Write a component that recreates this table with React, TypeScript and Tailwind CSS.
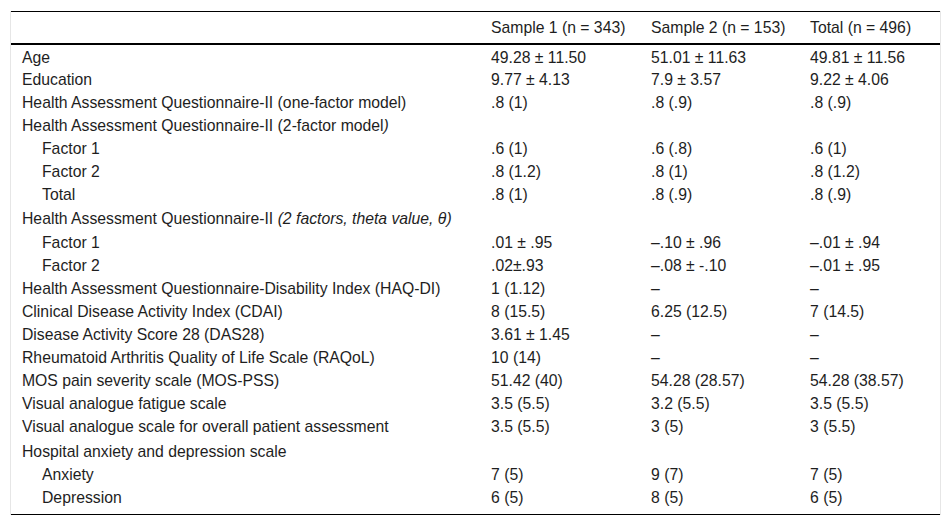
import React from "react";

type Row = {
  label: React.ReactNode;
  indent?: boolean;
  vals: string[];
  h?: string;
};

const rows: Row[] = [
  { label: "Age", vals: ["49.28 ± 11.50", "51.01 ± 11.63", "49.81 ± 11.56"], h: "h-[25px] [&>td]:pt-[2px]" },
  { label: "Education", vals: ["9.77 ± 4.13", "7.9 ± 3.57", "9.22 ± 4.06"] },
  { label: "Health Assessment Questionnaire-II (one-factor model)", vals: [".8 (1)", ".8 (.9)", ".8 (.9)"] },
  {
    label: (
      <>
        Health Assessment Questionnaire-II (2-factor model<i>)</i>
      </>
    ),
    vals: ["", "", ""],
  },
  { label: "Factor 1", indent: true, vals: [".6 (1)", ".6 (.8)", ".6 (1)"] },
  { label: "Factor 2", indent: true, vals: [".8 (1.2)", ".8 (1)", ".8 (1.2)"] },
  { label: "Total", indent: true, vals: [".8 (1)", ".8 (.9)", ".8 (.9)"] },
  {
    label: (
      <>
        Health Assessment Questionnaire-II <i>(2 factors, theta value, θ)</i>
      </>
    ),
    vals: ["", "", ""],
    h: "h-[25px]",
  },
  { label: "Factor 1", indent: true, vals: [".01 ± .95", "–.10 ± .96", "–.01 ± .94"] },
  { label: "Factor 2", indent: true, vals: [".02±.93", "–.08 ± -.10", "–.01 ± .95"] },
  { label: "Health Assessment Questionnaire-Disability Index (HAQ-DI)", vals: ["1 (1.12)", "–", "–"] },
  { label: "Clinical Disease Activity Index (CDAI)", vals: ["8 (15.5)", "6.25 (12.5)", "7 (14.5)"] },
  { label: "Disease Activity Score 28 (DAS28)", vals: ["3.61 ± 1.45", "–", "–"] },
  { label: "Rheumatoid Arthritis Quality of Life Scale (RAQoL)", vals: ["10 (14)", "–", "–"] },
  { label: "MOS pain severity scale (MOS-PSS)", vals: ["51.42 (40)", "54.28 (28.57)", "54.28 (38.57)"] },
  { label: "Visual analogue fatigue scale", vals: ["3.5 (5.5)", "3.2 (5.5)", "3.5 (5.5)"] },
  { label: "Visual analogue scale for overall patient assessment", vals: ["3.5 (5.5)", "3 (5)", "3 (5.5)"] },
  { label: "Hospital anxiety and depression scale", vals: ["", "", ""], h: "h-[25px] [&>td]:pt-[2px]" },
  { label: "Anxiety", indent: true, vals: ["7 (5)", "9 (7)", "7 (5)"] },
  { label: "Depression", indent: true, vals: ["6 (5)", "8 (5)", "6 (5)"], h: "h-[28px] [&>td]:pb-[4px]" },
];

export default function App() {
  return (
    <div
      className="w-[951px] h-[526px] bg-white pt-[11px] pl-[10px]"
      style={{ fontFamily: '"Liberation Sans", Arial, sans-serif' }}
    >
      <div className="w-[931px] border-x border-[#e6e6e6]">
        <table className="w-full border-collapse text-[15.75px] leading-[18px] text-[#1e1e1e]">
          <colgroup>
            <col className="w-[469px]" />
            <col className="w-[160px]" />
            <col className="w-[159px]" />
            <col />
          </colgroup>
          <thead>
            <tr className="h-[32px] border-t border-black border-b-2 border-b-black">
              <th className="font-normal text-left pl-[11px] pt-[1px]"></th>
              <th className="font-normal text-left pl-[11px] pt-[1px]">Sample 1 (n = 343)</th>
              <th className="font-normal text-left pl-[11px] pt-[1px]">Sample 2 (n = 153)</th>
              <th className="font-normal text-left pl-[11px] pt-[1px]">Total (n = 496)</th>
            </tr>
          </thead>
          <tbody className="border-b border-black">
            {rows.map((r, i) => (
              <tr key={i} className={r.h ?? "h-[23px]"}>
                <td className={r.indent ? "pl-[31px] whitespace-nowrap" : "pl-[11px] whitespace-nowrap"}>
                  {r.label}
                </td>
                {r.vals.map((v, j) => (
                  <td key={j} className="pl-[11px] whitespace-nowrap">
                    {v}
                  </td>
                ))}
              </tr>
            ))}
          </tbody>
        </table>
      </div>
    </div>
  );
}
